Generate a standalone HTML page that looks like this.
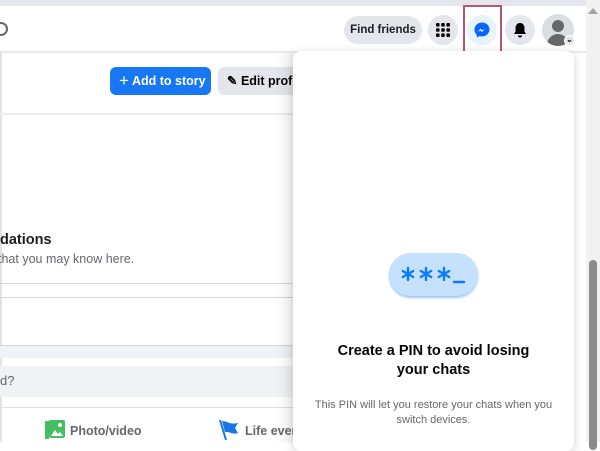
<!DOCTYPE html>
<html><head><style>
*{margin:0;padding:0;box-sizing:border-box}
body{width:600px;height:442px;overflow:hidden;background:#fff;font-family:"Liberation Sans",sans-serif;position:relative;color:#050505}
.a{position:absolute}
.circ{position:absolute;width:30px;height:30px;border-radius:50%;background:#e4e6eb}
</style></head><body>
<div class="a" style="left:0;top:0;width:600px;height:6px;background:#e4e6eb"></div>
<div class="a" style="left:0;top:51px;width:586px;height:2px;background:#e8e9ec"></div>
<div class="a" style="left:0;top:53px;width:2px;height:389px;background:#e2e2e2"></div>
<div class="a" style="left:-6px;top:22px;width:14px;height:14px;border:2px solid #65676b;border-radius:50%"></div>
<div class="a" style="left:110px;top:67px;width:101px;height:28px;background:#1877f2;border-radius:6px;color:#fff;font-weight:bold;font-size:12.5px;line-height:28px;padding-left:9px;white-space:nowrap"><span style="font-size:17px;font-weight:normal;vertical-align:-1px">+</span> Add to story</div>
<div class="a" style="left:218px;top:67px;width:80px;height:28px;background:#e4e6eb;border-radius:6px 0 0 6px;font-weight:bold;font-size:12.5px;line-height:28px;padding-left:9px;white-space:nowrap;overflow:hidden">✎ Edit profile</div>
<div class="a" style="left:0;top:113px;width:294px;height:2px;background:#ececec"></div>
<div class="a" style="left:0;top:232px;font-size:14.5px;font-weight:bold;color:#1c1e21">dations</div>
<div class="a" style="left:-2px;top:252px;font-size:12.5px;color:#65676b">that you may know here.</div>
<div class="a" style="left:0;top:283px;width:294px;height:1px;background:#d6d6d6"></div>
<div class="a" style="left:0;top:297px;width:294px;height:1px;background:#d6d6d6"></div>
<div class="a" style="left:0;top:345px;width:294px;height:1px;background:#d6d6d6"></div>
<div class="a" style="left:0;top:346px;width:294px;height:12px;background:#f0f2f5"></div>
<div class="a" style="left:0;top:366px;width:294px;height:31px;background:#f0f2f5"></div>
<div class="a" style="left:0;top:373px;font-size:13px;color:#65676b">d?</div>
<div class="a" style="left:0;top:407px;width:294px;height:1px;background:#e0e0e0"></div>
<svg class="a" style="left:45px;top:420px" width="20" height="19" viewBox="0 0 20 19"><rect x="0" y="1" width="4" height="18" fill="#45bd62"/><rect x="4" y="0" width="16" height="18" rx="2" fill="#45bd62"/><path d="M6 16l4-6 3 4 2-2 3 4z" fill="#fff"/><circle cx="15" cy="5" r="2" fill="#fff"/></svg>
<div class="a" style="left:70px;top:424px;font-size:12.5px;color:#65676b;font-weight:bold">Photo/video</div>
<svg class="a" style="left:219px;top:419px" width="22" height="22" viewBox="0 0 22 22"><path d="M1 1l6 20" stroke="#1b74e4" stroke-width="2"/><path d="M3 2c5 0 8 4 16 2l-3 5 3 5c-6 2-9-2-13-1z" fill="#1b74e4"/></svg>
<div class="a" style="left:245px;top:424px;font-size:12.5px;color:#65676b;font-weight:bold">Life event</div>
<div class="a" style="left:274px;top:53px;width:20px;height:389px;background:linear-gradient(90deg,rgba(0,0,0,0),rgba(0,0,0,0.06))"></div>
<div class="a" style="left:344px;top:16px;width:78px;height:28px;background:#e4e6eb;border-radius:14px;font-size:11.5px;font-weight:bold;line-height:28px;text-align:center;color:#1c1e21">Find friends</div>
<div class="circ" style="left:428px;top:15px"></div>
<svg class="a" style="left:436px;top:23px" width="14" height="14" viewBox="0 0 14 14" fill="#050505"><rect x="0" y="0" width="3.6" height="3.6" rx="1"/><rect x="5.2" y="0" width="3.6" height="3.6" rx="1"/><rect x="10.4" y="0" width="3.6" height="3.6" rx="1"/><rect x="0" y="5.2" width="3.6" height="3.6" rx="1"/><rect x="5.2" y="5.2" width="3.6" height="3.6" rx="1"/><rect x="10.4" y="5.2" width="3.6" height="3.6" rx="1"/><rect x="0" y="10.4" width="3.6" height="3.6" rx="1"/><rect x="5.2" y="10.4" width="3.6" height="3.6" rx="1"/><rect x="10.4" y="10.4" width="3.6" height="3.6" rx="1"/></svg>
<div class="circ" style="left:467px;top:15px;background:#e7f3ff"></div>
<svg class="a" style="left:474px;top:22px" width="16" height="16" viewBox="0 0 16 16"><path d="M8 .5C3.8.5.5 3.6.5 7.6c0 2.1.9 3.9 2.3 5.2v2.7l2.5-1.4c.8.2 1.7.3 2.7.3 4.2 0 7.5-3.1 7.5-7 0-4-3.3-6.9-7.5-6.9z" fill="#0866ff"/><path d="M3.5 10l3-3.2 1.6 1.6 2.9-1.6-3 3.2-1.6-1.6z" fill="#fff"/></svg>
<div class="a" style="left:463px;top:5px;width:39px;height:52px;border:2px solid #b5566e"></div>
<div class="circ" style="left:505px;top:15px"></div>
<svg class="a" style="left:513px;top:22px" width="14" height="16" viewBox="0 0 14 16"><path d="M7 1C4 1 2.5 3.5 2.5 6v3.5L1 12h12l-1.5-2.5V6C11.5 3.5 10 1 7 1z" fill="#050505"/><path d="M5 13.5a2 2 0 004 0z" fill="#050505"/></svg>
<div class="circ" style="left:542px;top:14px;width:32px;height:32px;background:#dadde1;overflow:hidden"><div class="a" style="left:10px;top:6px;width:12px;height:12px;border-radius:50%;background:#65676b"></div><div class="a" style="left:5px;top:20px;width:22px;height:16px;border-radius:11px 11px 0 0;background:#65676b"></div></div>
<div class="a" style="left:564px;top:35px;width:11px;height:11px;border-radius:50%;background:#e4e6eb;border:1px solid #fff;font-size:8px;line-height:8px;text-align:center;font-weight:bold">⌄</div>
<div class="a" style="left:293px;top:51px;width:281px;height:400px;background:#fff;border-radius:8px;box-shadow:0 2px 10px rgba(0,0,0,0.18)"></div>
<div class="a" style="left:389px;top:253px;width:89px;height:43px;border-radius:22px;background:#c6e1fd;box-shadow:0 2px 2px #9dc9f7"></div>
<svg class="a" style="left:389px;top:253px" width="89" height="43" viewBox="0 0 89 43"><g stroke="#0a7cff" stroke-width="2.4" stroke-linecap="round"><g transform="translate(19,21)"><path d="M0-6V6M-5.2-3L5.2 3M-5.2 3L5.2-3"/></g><g transform="translate(37,21)"><path d="M0-6V6M-5.2-3L5.2 3M-5.2 3L5.2-3"/></g><g transform="translate(55,21)"><path d="M0-6V6M-5.2-3L5.2 3M-5.2 3L5.2-3"/></g><path d="M65 29H75"/></g></svg>
<div class="a" style="left:293px;top:342px;width:281px;text-align:center;font-size:14.5px;font-weight:bold;line-height:19px">Create a PIN to avoid losing<br>your chats</div>
<div class="a" style="left:293px;top:398px;width:281px;text-align:center;font-size:11px;color:#65676b;line-height:15px">This PIN will let you restore your chats when you<br>switch devices.</div>
<div class="a" style="left:586px;top:0;width:14px;height:442px;background:#f1f1f1"></div>
<div class="a" style="left:588px;top:8px;width:0;height:0;border-left:5px solid transparent;border-right:5px solid transparent;border-bottom:6px solid #a3a3a3"></div>
<div class="a" style="left:589px;top:260px;width:8px;height:190px;border-radius:4px;background:#8a8a8a"></div>
</body></html>
